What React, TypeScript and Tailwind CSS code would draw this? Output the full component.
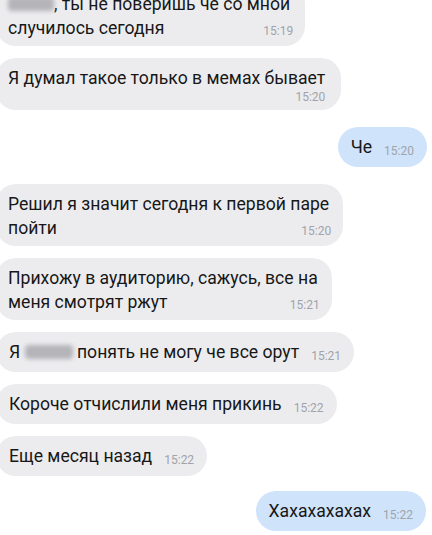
import type { ReactNode } from 'react';

const font = { fontFamily: 'Roboto, "Noto Sans", sans-serif' };

function Blur({ w }: { w: number }) {
  return (
    <span
      className="inline-block h-[14px] rounded-sm bg-[#b4b4b9] align-[-1px] blur-[2px]"
      style={{ width: w }}
    />
  );
}

function Time({ t }: { t: string }) {
  return <span className="text-[12px] leading-[14px] text-[#a0a3a9]">{t}</span>;
}

// single line bubble: time sits inline after the text, a bit lower
function Inline({ out, time, children, className = '' }: { out?: boolean; time: string; children: ReactNode; className?: string }) {
  return (
    <div
      className={`flex h-[40px] items-end gap-3 whitespace-nowrap rounded-[20px] pb-2 pl-[13px] pr-[13px] ${
        out ? 'self-end bg-[#cfe3fb]' : 'self-start ml-[-4px] bg-[#ececef]'
      } ${className}`}
    >
      <span className="text-[17.6px] leading-[24px]">{children}</span>
      <span className="mb-[-3px]"><Time t={time} /></span>
    </div>
  );
}

// multi-line bubble, time in bottom right corner over the short last line
function Multi({ time, children, className = '' }: { time: string; children: ReactNode; className?: string }) {
  return (
    <div className={`relative ml-[-4px] self-start whitespace-nowrap rounded-[20px] bg-[#ececef] pb-[6px] pl-3 pt-2 ${className}`}>
      <p className="text-[17.6px] leading-[24px]">{children}</p>
      <span className="absolute bottom-[4px] right-[12px]"><Time t={time} /></span>
    </div>
  );
}

export default function App() {
  return (
    <div className="h-[535px] w-[432px] overflow-hidden bg-white text-[#171717]" style={font}>
      <div className="flex flex-col">
        <Multi time="15:19" className="mt-[-16px] pr-[15px]">
          <Blur w={46} />, ты не поверишь че со мной
          <br />
          случилось сегодня
        </Multi>

        <div className="ml-[-4px] mt-3 self-start whitespace-nowrap rounded-[20px] bg-[#ececef] pb-[6px] pl-3 pr-[16px] pt-2">
          <p className="text-[17.6px] leading-[24px]">Я думал такое только в мемах бывает</p>
          <div className="flex justify-end leading-[14px]"><Time t="15:20" /></div>
        </div>

        <Inline out time="15:20" className="mr-[5px] mt-[17px]">Че</Inline>

        <Multi time="15:20" className="mt-[17px] pr-[14px]">
          Решил я значит сегодня к первой паре
          <br />
          пойти
        </Multi>

        <Multi time="15:21" className="mt-3 pr-[14px]">
          Прихожу в аудиторию, сажусь, все на
          <br />
          меня смотрят ржут
        </Multi>

        <Inline time="15:21" className="mt-3">
          Я <Blur w={48} /> понять не могу че все орут
        </Inline>

        <Inline time="15:22" className="mt-3">Короче отчислили меня прикинь</Inline>

        <Inline time="15:22" className="mt-3">Еще месяц назад</Inline>

        <Inline out time="15:22" className="mr-[6px] mt-[15px]">Хахахахахах</Inline>
      </div>
    </div>
  );
}
